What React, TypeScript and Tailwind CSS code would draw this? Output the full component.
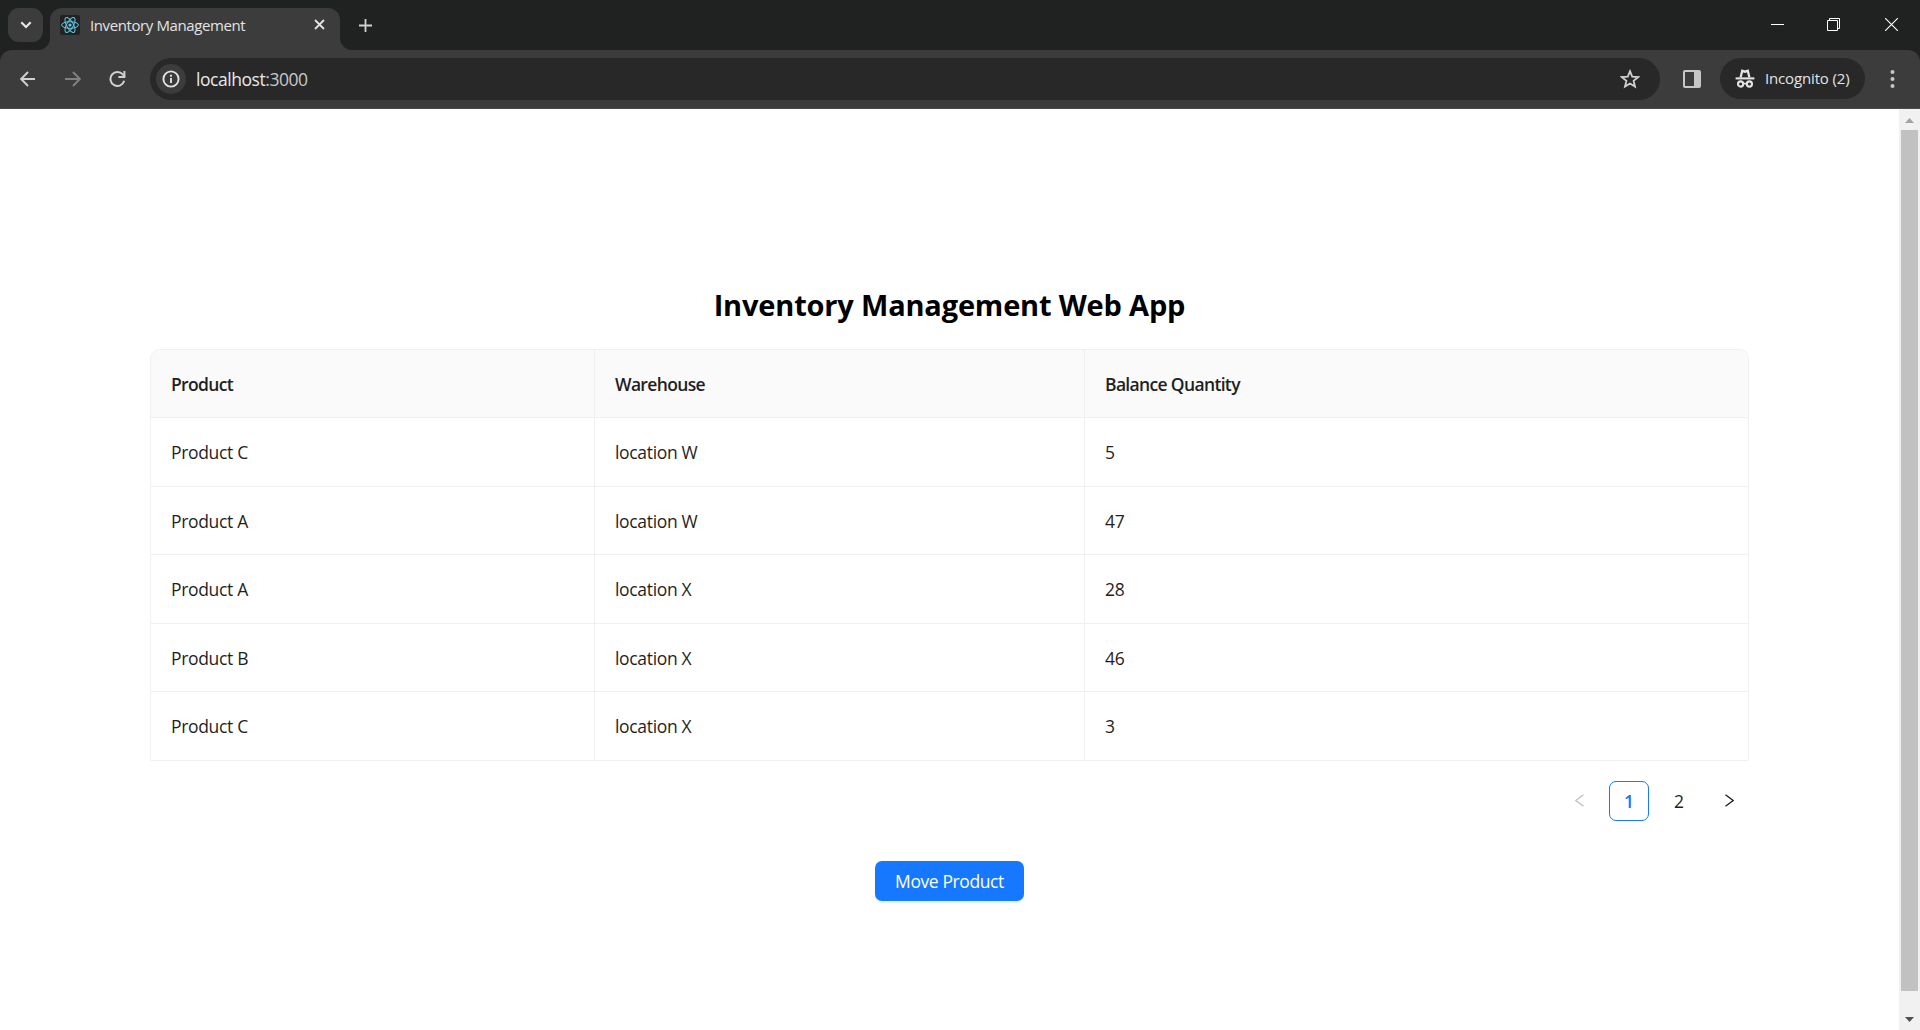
import type { ReactNode } from "react";

const rows = [
  ["Product C", "location W", "5"],
  ["Product A", "location W", "47"],
  ["Product A", "location X", "28"],
  ["Product B", "location X", "46"],
  ["Product C", "location X", "3"],
];

const columns = "grid grid-cols-[444px_490px_1fr]";

function TabStrip() {
  return (
    <div className="flex h-[50px] items-start bg-[#202221]">
      <button className="ml-2 mt-2 flex h-[34px] w-[35px] items-center justify-center rounded-[11px] bg-[#3c3c3c]">
        <svg width="12" height="8" viewBox="0 0 12 8" fill="none" stroke="#e8e8e8" strokeWidth="2.1">
          <path d="M1.3 1.3 6 6l4.7-4.7" />
        </svg>
      </button>
      <svg className="ml-[-5px] mt-[38px]" width="12" height="12" fill="#3c3c3c">
        <path d="M12 0v12H0A12 12 0 0 0 12 0Z" />
      </svg>
      <div className="mt-2 flex h-[42px] w-[290px] items-center rounded-t-[12px] bg-[#3c3c3c] pl-[10px]">
        <span className="mb-[9px] flex size-5 items-center justify-center rounded-[2px] bg-[#222]">
          <svg width="18" height="18" viewBox="0 0 18 18" fill="none" stroke="#5fc9e6" strokeWidth="1">
            <ellipse cx="9" cy="9" rx="8.4" ry="3.3" />
            <ellipse cx="9" cy="9" rx="8.4" ry="3.3" transform="rotate(60 9 9)" />
            <ellipse cx="9" cy="9" rx="8.4" ry="3.3" transform="rotate(120 9 9)" />
            <circle cx="9" cy="9" r="1.6" fill="#5fc9e6" stroke="none" />
          </svg>
        </span>
        <span className="mb-[8px] ml-[10px] whitespace-nowrap text-[15px] leading-5 tracking-[-0.4px] text-[#e3e3e3]">
          Inventory Management
        </span>
        <svg className="mb-[9px] ml-auto mr-[15px]" width="11" height="11" viewBox="0 0 11 11" stroke="#e3e3e3" strokeWidth="1.8">
          <path d="m1 1 9 9M10 1l-9 9" />
        </svg>
      </div>
      <svg className="mt-[38px]" width="12" height="12" fill="#3c3c3c">
        <path d="M0 0v12h12A12 12 0 0 1 0 0Z" />
      </svg>
      <svg className="ml-[7px] mt-[19px]" width="13" height="13" viewBox="0 0 13 13" stroke="#d0d0d0" strokeWidth="1.8">
        <path d="M6.5 0v13M0 6.5h13" />
      </svg>
      <div className="ml-auto mr-[22px] mt-[18px] flex items-start">
        <svg width="13" height="13" stroke="#fff"><path d="M0 6.5h13" /></svg>
        <svg className="ml-[43px]" width="13" height="13" fill="none" stroke="#fff">
          <path d="M.5 2.5h10v10H.5zM2.5 2.5v-2h10v10h-2" />
        </svg>
        <svg className="ml-[45px]" width="13" height="13" stroke="#fff" strokeWidth="1.1"><path d="m0 0 13 13M13 0 0 13" /></svg>
      </div>
    </div>
  );
}

function Toolbar() {
  return (
    <div className="bg-[#202221]">
      <div className="flex h-[59px] items-start rounded-t-[12px] border-b border-[#4b4b4b] bg-[#3c3c3c] pt-2">
        <svg className="ml-[20px] mt-[13px]" width="16" height="16" viewBox="0 0 16 16" fill="none" stroke="#d0d0d0" strokeWidth="1.9">
          <path d="M15 8H1.5M8 1 1.2 8 8 15" />
        </svg>
        <svg className="ml-[29px] mt-[13px]" width="16" height="16" viewBox="0 0 16 16" fill="none" stroke="#808080" strokeWidth="1.9">
          <path d="M0 8h14M8 1l6.8 7L8 15" />
        </svg>
        <svg className="ml-[28px] mt-[12px]" width="18" height="18" viewBox="0 0 18 18" fill="none" stroke="#d0d0d0" strokeWidth="2">
          <path d="M15.2 10.8a7 7 0 1 1-1.4-6.4L15.6 6.3" />
          <path d="M15.4 1v6H9.4" />
        </svg>
        <div className="ml-[23px] flex h-[42px] w-[1510px] items-center rounded-full bg-[#282828] pl-[6px] pr-[20px]">
          <span className="flex size-[30px] items-center justify-center rounded-full bg-[#3c3c3c]">
            <svg width="18" height="18" viewBox="0 0 18 18" fill="none" stroke="#e3e3e3" strokeWidth="1.9">
              <circle cx="9" cy="9" r="7.6" />
              <path d="M9 8v5M9 4.8v2" />
            </svg>
          </span>
          <span className="ml-[10px] text-[17.5px] leading-6 tracking-[-0.45px] text-[#c8c8c8]">
            <span className="text-[#e8e8e8]">localhost</span>:3000
          </span>
          <svg className="ml-auto" width="20" height="20" viewBox="0 0 20 20" fill="none" stroke="#d0d0d0" strokeWidth="1.8">
            <path d="m10 2.2 2.2 5.4 5.9.5-4.5 3.8 1.4 5.7-5-3.1-5 3.1 1.4-5.7L1.9 8.1l5.9-.5Z" />
          </svg>
        </div>
        <svg className="ml-[23px] mt-[12px]" width="18" height="18" viewBox="0 0 18 18">
          <rect x="1" y="1" width="16" height="16" rx="1" fill="none" stroke="#c7c7c7" strokeWidth="2" />
          <path d="M11 1h6v16h-6z" fill="#c7c7c7" />
        </svg>
        <div className="ml-[19px] flex h-[41px] w-[145px] items-center rounded-full bg-[#282828] pl-[15px]">
          <svg className="mb-px" width="20" height="19" viewBox="0 0 20 19" fill="none" stroke="#e3e3e3">
            <path d="M5.6 8.5 7.2 1.8l2.8.9 2.8-.9 1.6 6.7" strokeWidth="2.3" />
            <path d="M.6 9.4h18.8" strokeWidth="2.1" />
            <circle cx="5.6" cy="15" r="2.6" strokeWidth="2.1" />
            <circle cx="14.4" cy="15" r="2.6" strokeWidth="2.1" />
            <path d="M8 14.6h4" strokeWidth="1.7" />
          </svg>
          <span className="mb-[2px] ml-[10px] whitespace-nowrap text-[15px] leading-5 tracking-[-0.15px] text-[#e3e3e3]">Incognito (2)</span>
        </div>
        <svg className="ml-[25px] mt-[11px]" width="5" height="20" viewBox="0 0 5 20" fill="#c7c7c7">
          <circle cx="2.5" cy="3" r="2" />
          <circle cx="2.5" cy="10" r="2" />
          <circle cx="2.5" cy="17" r="2" />
        </svg>
      </div>
    </div>
  );
}

function Cell({ children, last, header }: { children: ReactNode; last: boolean; header?: boolean }) {
  return (
    <div
      className={`flex items-center pl-5 pt-px text-[17.5px] ${last ? "" : "border-r border-[#f0f0f0]"} ${
        header ? "font-semibold tracking-[-0.66px]" : "tracking-[-0.33px]"
      }`}
    >
      {children}
    </div>
  );
}

function InventoryTable() {
  return (
    <div className="w-[1599px] rounded-t-[10px] border border-[#f0f0f0] text-[#1f1f1f]">
      <div className={`${columns} h-[68px] rounded-t-[9px] border-b border-[#f0f0f0] bg-[#fafafa]`}>
        {["Product", "Warehouse", "Balance Quantity"].map((h, i) => (
          <Cell key={h} last={i === 2} header>{h}</Cell>
        ))}
      </div>
      {rows.map((row, r) => (
        <div
          key={r}
          className={`${columns} ${r === 4 ? "h-[68px]" : r % 2 ? "h-[68px] border-b" : "h-[69px] border-b"} border-[#f0f0f0]`}
        >
          {row.map((c, i) => (
            <Cell key={i} last={i === 2}>{c}</Cell>
          ))}
        </div>
      ))}
    </div>
  );
}

function Pagination() {
  return (
    <div className="mt-5 flex h-10 w-[1599px] items-center justify-end gap-[10px] text-[17.5px]">
      <span className="flex size-10 items-center justify-center pb-px">
        <svg width="9" height="13" viewBox="0 0 9 13" fill="none" stroke="#bfbfbf" strokeWidth="1.3"><path d="M8.5.8.8 6.5l7.7 5.7" /></svg>
      </span>
      <span className="flex size-10 items-center justify-center rounded-[7px] border border-[#1677ff] pt-px font-semibold text-[#1677ff]">1</span>
      <span className="flex size-10 items-center justify-center pt-px text-[#1f1f1f]">2</span>
      <span className="flex size-10 items-center justify-center pb-px">
        <svg width="9" height="13" viewBox="0 0 9 13" fill="none" stroke="#1f1f1f" strokeWidth="1.4"><path d="m.5.8 7.7 5.7-7.7 5.7" /></svg>
      </span>
    </div>
  );
}

function Scrollbar() {
  return (
    <div className="flex w-[21px] flex-col items-center bg-[#f1f1f1]">
      <svg className="mt-[9px]" width="9" height="5" fill="#a3a3a3"><path d="M4.5 0 9 5H0z" /></svg>
      <div className="mt-[7px] h-[861px] w-[17px] bg-[#c1c1c1]" />
      <svg className="mt-[26px]" width="9" height="5" fill="#505050"><path d="M4.5 5 9 0H0z" /></svg>
    </div>
  );
}

export default function App() {
  return (
    <div className="flex h-[1030px] w-[1920px] flex-col overflow-hidden bg-white font-['Open_Sans','Noto_Sans',sans-serif]">
      <TabStrip />
      <Toolbar />
      <div className="flex flex-1">
        <main className="flex flex-1 flex-col items-center">
          <h1 className="mt-[176px] h-[64px] whitespace-nowrap text-[29px] font-bold leading-[40px] tracking-[-0.18px] text-black">
            Inventory Management Web App
          </h1>
          <InventoryTable />
          <Pagination />
          <button className="mt-10 flex h-10 w-[149px] items-center justify-center whitespace-nowrap rounded-[7px] bg-[#1677ff] text-[17.5px] tracking-[-0.4px] text-white shadow-[0_2px_0_rgba(5,145,255,0.1)]">
            Move Product
          </button>
        </main>
        <Scrollbar />
      </div>
    </div>
  );
}
